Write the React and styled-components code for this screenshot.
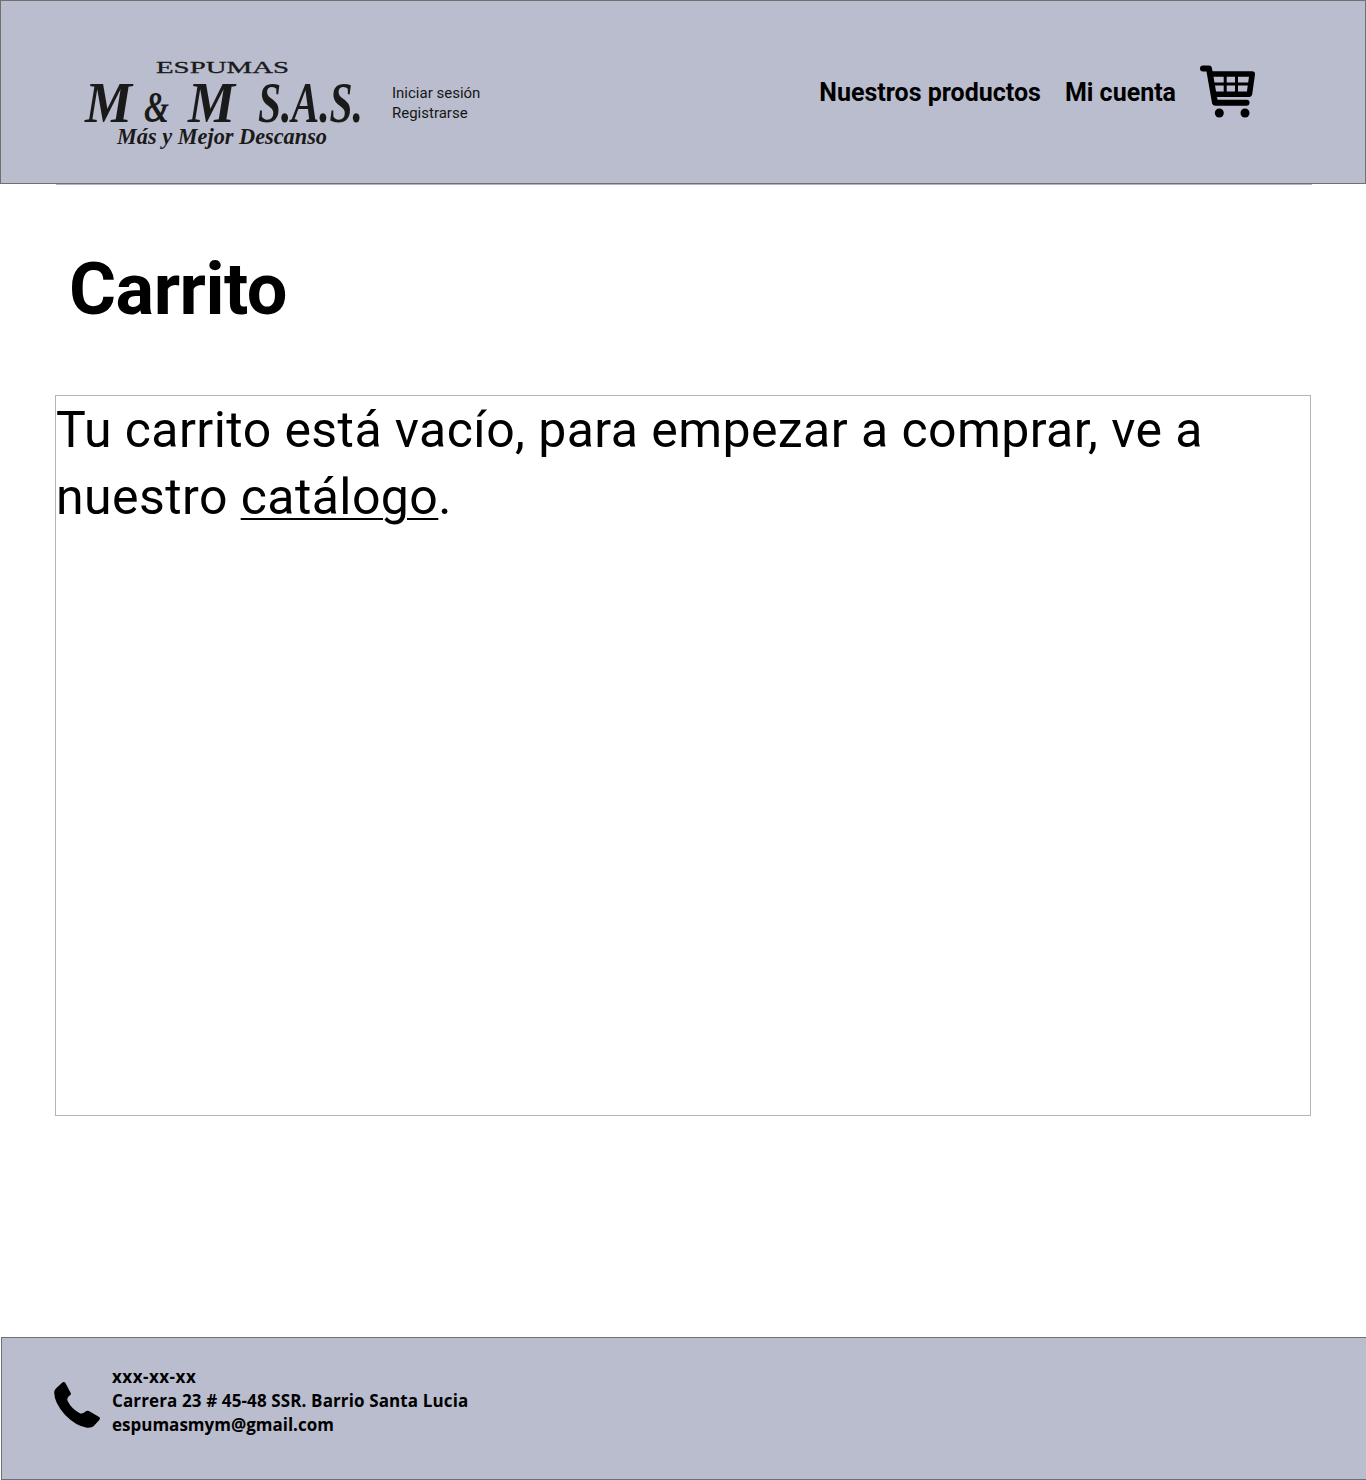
import React from 'react';
import styled, { createGlobalStyle } from 'styled-components';

const GlobalStyle = createGlobalStyle`
  *, *::before, *::after { box-sizing: border-box; }
  body { margin: 0; background: #fff; color: #000; font-family: Roboto, sans-serif; }
`;

const Page = styled.div`
  display: flex;
  flex-direction: column;
  min-height: 1480px;
  overflow: hidden;
`;

const Header = styled.header`
  display: flex;
  align-items: flex-start;
  height: 184px;
  padding: 54px 110px 0 79px;
  background: #babdce;
  border: 1px solid #707070;
`;

const Logo = styled.svg`
  width: 285px;
  height: 100px;
  flex: none;
  overflow: visible;
  fill: #1a1a1a;
  font-family: 'Liberation Serif', serif;
`;

const Script = styled.text`
  font-style: italic;
  font-weight: 700;
  font-size: ${(p) => p.$size}px;
`;

const Caption = styled.text`
  font-size: 17px;
  stroke: #1a1a1a;
  stroke-width: 0.3px;
`;

const Access = styled.div`
  display: flex;
  flex-direction: column;
  margin: 28px 0 0 27px;
`;

const AccessLink = styled.a`
  font-size: 15px;
  line-height: 20px;
  color: #161616;
`;

const Nav = styled.nav`
  display: flex;
  align-items: flex-start;
  gap: 24px;
  margin-left: auto;
`;

const NavLink = styled.a`
  margin-top: 21px;
  font-size: 25px;
  line-height: 33px;
  font-weight: 700;
  white-space: nowrap;
`;

const CartIcon = styled.svg`
  width: 55px;
  height: 53px;
  margin-top: 10px;
`;

const Main = styled.main`
  width: 1256px;
  margin-left: 55px;
`;

const Divider = styled.hr`
  height: 1px;
  margin: 0 -1px 0 1px;
  border: 0;
  background: #b5b5b5;
`;

const Title = styled.h1`
  margin: 56px 0 0 14px;
  font-size: 72px;
  line-height: 97px;
  font-weight: 700;
  letter-spacing: -0.5px;
`;

const CartPanel = styled.section`
  height: 721px;
  margin-top: 57px;
  padding-top: 1px;
  border: 1px solid #b5b5b5;
`;

const Message = styled.p`
  margin: 0;
  font-size: 50px;
  line-height: 67px;
  letter-spacing: 0.43px;
`;

const CatalogLink = styled.a`
  text-decoration: underline;
  text-decoration-thickness: 2px;
  text-underline-offset: 4px;
`;

const Footer = styled.footer`
  display: flex;
  align-items: flex-start;
  height: 143px;
  margin: auto -1px 0 1px;
  padding: 27px 0 0 52px;
  background: #babdce;
  border: 1px solid #707070;
`;

const PhoneIcon = styled.svg`
  width: 46px;
  height: 46px;
  margin-top: 17px;
`;

const Contact = styled.address`
  margin-left: 12px;
  font-family: 'Open Sans', 'Noto Sans', sans-serif;
  font-style: normal;
  font-weight: 700;
  font-size: 17px;
  line-height: 24px;
`;

const ContactLine = styled.div`
  letter-spacing: ${(p) => p.$spacing || 0}px;
`;

function BrandLogo() {
  return (
    <Logo viewBox="80 55 285 100" role="img" aria-label="Espumas M & M S.A.S.">
      <Caption x="156" y="73" textLength="133" lengthAdjust="spacingAndGlyphs">ESPUMAS</Caption>
      <Script $size={58} x="85" y="122" textLength="47" lengthAdjust="spacingAndGlyphs">M</Script>
      <Script $size={44} x="144" y="122" textLength="25" lengthAdjust="spacingAndGlyphs">&amp;</Script>
      <Script $size={58} x="188" y="122" textLength="47" lengthAdjust="spacingAndGlyphs">M</Script>
      <Script $size={58} x="258" y="122" textLength="105" lengthAdjust="spacingAndGlyphs">S.A.S.</Script>
      <Script $size={24} x="117" y="144" textLength="210" lengthAdjust="spacingAndGlyphs">Más y Mejor Descanso</Script>
    </Logo>
  );
}

function Cart() {
  return (
    <CartIcon viewBox="1200 65 55 53" fill="none" stroke="#000" strokeLinecap="round" strokeLinejoin="round">
      <path d="M1203 68.6H1209L1215 102.7H1246.5" strokeWidth="6" />
      <path d="M1212 74H1252.2L1249.4 94.2H1215" strokeWidth="5.6" />
      <path d="M1213 84H1251M1225.2 74V94M1236.5 74V94" strokeWidth="3" />
      <circle cx="1219.3" cy="113" r="4.5" fill="#000" stroke="none" />
      <circle cx="1245" cy="113" r="4.5" fill="#000" stroke="none" />
    </CartIcon>
  );
}

function Phone() {
  return (
    <PhoneIcon viewBox="42 155 138 139">
      <path d="M71 155Q74 155 76 158L92 188Q94 192 89 196Q80 201 82 211Q95 238 121 250Q129 252 135 246Q141 240 147 243L178 261Q182 264 179 269L161 289Q156 294 141 293Q110 290 75 255Q42 217 42 186Q42 180 48 174L66 157Q68 155 71 155Z" />
    </PhoneIcon>
  );
}

export default function App() {
  return (
    <Page>
      <GlobalStyle />
      <Header>
        <BrandLogo />
        <Access>
          <AccessLink>Iniciar sesión</AccessLink>
          <AccessLink>Registrarse</AccessLink>
        </Access>
        <Nav>
          <NavLink>Nuestros productos</NavLink>
          <NavLink>Mi cuenta</NavLink>
          <Cart />
        </Nav>
      </Header>
      <Main>
        <Divider />
        <Title>Carrito</Title>
        <CartPanel>
          <Message>
            Tu carrito está vacío, para empezar a comprar, ve a nuestro <CatalogLink>catálogo</CatalogLink>.
          </Message>
        </CartPanel>
      </Main>
      <Footer>
        <Phone />
        <Contact>
          <ContactLine $spacing={0.5}>xxx-xx-xx</ContactLine>
          <ContactLine $spacing={0.12}>Carrera 23 # 45-48 SSR. Barrio Santa Lucia</ContactLine>
          <ContactLine>espumasmym@gmail.com</ContactLine>
        </Contact>
      </Footer>
    </Page>
  );
}
